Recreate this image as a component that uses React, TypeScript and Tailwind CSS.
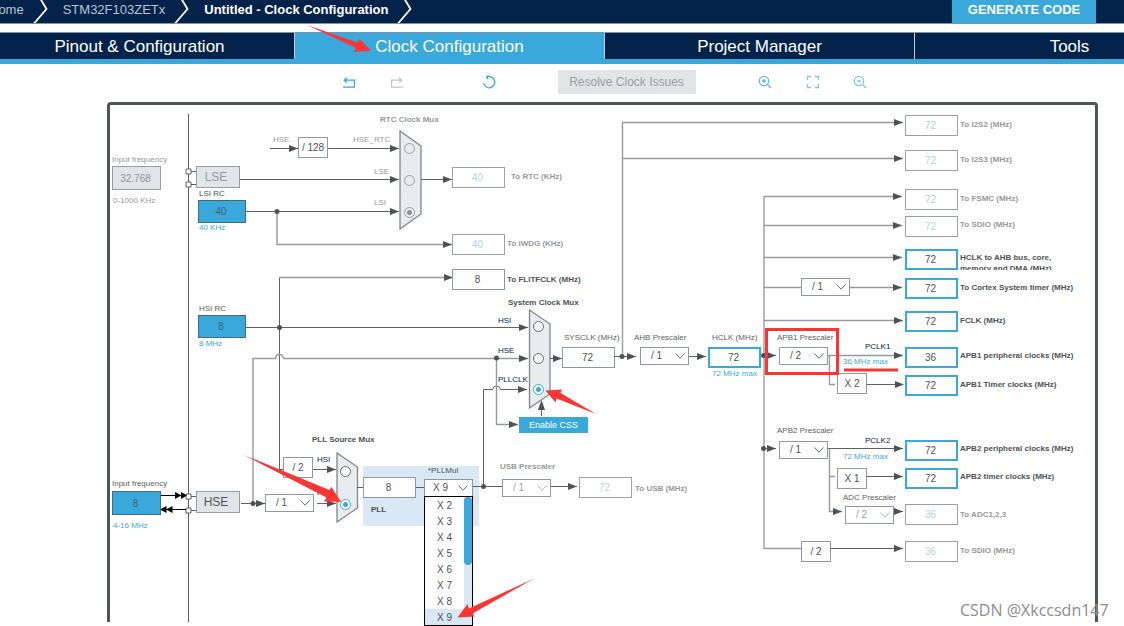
import React, { useState } from "react";

/* Board coordinates count from the top of the window; the board starts below the toolbar. */
const BOARD_TOP = 100;

type Tone = "dark" | "mid" | "gray" | "blue" | "navy";

const toneClass: Record<Tone, string> = {
  dark: "text-[#4d5256]",
  mid: "text-[#5d6164]",
  gray: "text-[#96999b]",
  blue: "text-[#39a9dc]",
  navy: "text-[#03234b]",
};

const place = (x: number, y: number, w?: number, h?: number): React.CSSProperties => ({
  left: x,
  top: y - BOARD_TOP,
  width: w,
  height: h,
});

/* y is the vertical middle of the text line */
function Caption({ x, y, text, tone = "mid", bold = false, htmlFor }: {
  x: number; y: number; text: string; tone?: Tone; bold?: boolean; htmlFor?: string;
}) {
  const cls = `absolute whitespace-nowrap text-[8px] leading-[10px] ${toneClass[tone]} ${bold ? "font-bold" : ""}`;
  return htmlFor ? (
    <label htmlFor={htmlFor} className={cls} style={place(x, y - 5)}>{text}</label>
  ) : (
    <span className={cls} style={place(x, y - 5)}>{text}</span>
  );
}

type Look = "off" | "plain" | "active" | "source" | "sourceOff";

const lookClass: Record<Look, string> = {
  off: "border border-[#9aa2a8] bg-white text-[#b9d0e6]",
  plain: "border border-[#8f989e] bg-white text-[#4d5256]",
  active: "border-2 border-[#39a9dc] bg-white text-[#4d5256]",
  source: "border border-[#47697c] bg-[#39a9dc] text-[#44606f]",
  sourceOff: "border border-[#959ea5] bg-[#e1e5e8] text-[#8c969c]",
};

function ValueBox({ id, x, y, w = 53, h = 21, value, look = "plain", label }: {
  id: string; x: number; y: number; w?: number; h?: number; value: string; look?: Look; label?: string;
}) {
  return (
    <input
      id={id}
      aria-label={label}
      defaultValue={value}
      disabled={look === "off" || look === "sourceOff"}
      className={`absolute p-0 pr-0.5 text-center text-[10px] leading-4 outline-none ${lookClass[look]}`}
      style={place(x, y, w, h)}
    />
  );
}

function Fixed({ x, y, text }: { x: number; y: number; text: string }) {
  return (
    <div
      className="absolute flex items-center justify-center whitespace-nowrap border border-[#8f989e] bg-white text-[10px] text-[#4d5256]"
      style={place(x, y, 30, 21)}
    >
      {text}
    </div>
  );
}

function Chevron({ color }: { color: string }) {
  return (
    <svg viewBox="0 0 10 6" className="pointer-events-none absolute right-1 top-1/2 h-1.5 w-2.5 -translate-y-1/2" aria-hidden="true">
      <path d="M.5 .5 5 5.200 9.500 .5" fill="none" stroke={color} strokeWidth="1" />
    </svg>
  );
}

function Prescaler({ id, x, y, value, label, off = false }: {
  id: string; x: number; y: number; value: string; label?: string; off?: boolean;
}) {
  return (
    <div className="absolute" style={place(x, y, 49, 18)}>
      <select
        id={id}
        aria-label={label}
        defaultValue={value}
        disabled={off}
        className={`block h-full w-full appearance-none border border-[#8f989e] bg-white p-0 pl-2.5 text-[10px] leading-4 opacity-100 outline-none ${off ? "text-[#9c9fa1]" : "text-[#4d5256]"}`}
      >
        {["/ 1", "/ 2", "/ 4", "/ 8", "/ 16"].map((o) => (
          <option key={o}>{o}</option>
        ))}
      </select>
      <Chevron color={off ? "#b3b7ba" : "#666a6d"} />
    </div>
  );
}

function MuxRadio({ group, x, y, label, checked, onChange, off = false }: {
  group: string; x: number; y: number; label: string; checked: boolean; onChange: () => void; off?: boolean;
}) {
  const ring = off
    ? "border-[#9c9fa1] checked:bg-[radial-gradient(circle,#8c9093_0_2px,transparent_3px)]"
    : "border-[#666a6d] checked:border-[#39a9dc] checked:bg-[radial-gradient(circle,#39a9dc_0_2px,#fff_3px)] bg-white";
  return (
    <input
      type="radio"
      name={group}
      aria-label={label}
      checked={checked}
      onChange={onChange}
      disabled={off}
      className={`absolute m-0 appearance-none rounded-full border ${ring}`}
      style={place(x - 5, y - 5, 11, 11)}
    />
  );
}

const outputs: { y: number; cap: number; value: string; text: string; on: boolean }[] = [
  { y: 115, cap: 125, value: "72", text: "To I2S2 (MHz)", on: false },
  { y: 150, cap: 160, value: "72", text: "To I2S3 (MHz)", on: false },
  { y: 189, cap: 199, value: "72", text: "To FSMC (MHz)", on: false },
  { y: 216, cap: 225, value: "72", text: "To SDIO (MHz)", on: false },
  { y: 278, cap: 288, value: "72", text: "To Cortex System timer (MHz)", on: true },
  { y: 311, cap: 321, value: "72", text: "FCLK (MHz)", on: true },
  { y: 347, cap: 356, value: "36", text: "APB1 peripheral clocks (MHz)", on: true },
  { y: 375, cap: 385, value: "72", text: "APB1 Timer clocks (MHz)", on: true },
  { y: 440, cap: 449, value: "72", text: "APB2 peripheral clocks (MHz)", on: true },
  { y: 468, cap: 477, value: "72", text: "APB2 timer clocks (MHz)", on: true },
  { y: 504, cap: 515, value: "36", text: "To ADC1,2,3", on: false },
  { y: 541, cap: 551, value: "36", text: "To SDIO (MHz)", on: false },
];

/* Tips of the arrow heads that point right */
const heads: [number, number][] = [
  [298, 148.5], [399, 148.5], [399, 179.5], [399, 211.5], [452, 179.5], [452, 244.5], [453, 277.5],
  [336, 469.5], [265, 503.5], [336, 503.5], [528, 327.5], [528, 358.5], [527, 389.5], [518, 424.5],
  [562, 358.5], [636, 356.5], [706, 356.5], [776, 355.5], [776, 448.5], [842, 511.5], [577, 486.5],
  [903, 122.5], [903, 158.5], [902, 196.5], [902, 225.5], [902, 257.5], [902, 287.5], [903, 320.5],
  [903, 355.5], [904, 384.5], [903, 448.5], [903, 476.5], [903, 511.5], [903, 548.5],
];

const dots: [number, number][] = [
  [277, 211.5], [279.5, 327.5], [253, 503.5], [496.5, 358], [622, 356.5], [763.5, 355.5], [763.5, 448.5], [483.5, 486.5],
];

function Wires() {
  return (
    <svg viewBox="0 100 1124 526" className="pointer-events-none absolute left-0 top-0 h-[526px] w-[1124px]" aria-hidden="true">
      <g fill="#e8ecef" stroke="#7f878c" strokeWidth="1.3">
        <path d="M400 131 421 146V214L400 229Z" />
        <path d="M529.5 310 550 324V394L529.5 408Z" />
        <path d="M337 453 357.500 467V508L337 522Z" />
      </g>
      <g fill="none" stroke="#5d6164" strokeWidth="1">
        <path d="M188.500 114V622" />
        <path d="M270 148.500H298M328 148.500H399M240 179.500H399M246 211.500H399M421 179.500H452" />
        <path d="M246 327.500H528M279.500 277.500V469.500H283M313 469.500H336" />
        <path d="M191 171.500H196M191 184.500H196M191 496.500H196M191 510.500H196" />
        <path d="M241 503.500H265M317 503.500H336M357 487.500H363M416 487.500H425M472 486.500H502M550 486.500H577" />
        <path d="M483.500 486.500V389.500H492.500Q493 386 496.500 386T500.500 389.500H527" />
        <path d="M550 358.500H562M615 356.500H636M688 356.500H706M541.500 416V403" />
        <path d="M760 355.500H776M764 448.500H776M828 448.500H903M866 476.500H903M866 384.500H903M893 511.500H903M831 548.500H903" />
      </g>
      <g fill="none" stroke="#979b9e" strokeWidth="1.4">
        <path d="M277 211.500V244.500H452M279.500 277.500H452" />
        <path d="M253 503V358.500H275.500Q276 354.500 279.500 354.500T283.500 358.500H528" />
        <path d="M496.500 358V424.500H518" />
        <path d="M622.500 356V122.500H903M622.500 158.500H903" />
        <path d="M764 196.500H902M764 225.500H902M764 257.500H902M764 287.500H902M764 320.500H903M764 196.500V548.500H801" />
        <path d="M828 355.500H903M829.500 355.500V384.500H835M829.500 448.500V511.500H842M829.500 476.500H835" />
      </g>
      <g fill="#4d5256">
        {heads.map(([x, y]) => (
          <path key={`${x}-${y}`} d={`M${x} ${y}L${x - 9} ${y - 3.5}V${y + 3.5}Z`} />
        ))}
        <path d="M541.500 400 538 410H545Z" />
        {dots.map(([x, y]) => (
          <circle key={`${x}-${y}`} cx={x} cy={y} r="2.5" />
        ))}
      </g>
      <g fill="#fff" stroke="#5d6164" strokeWidth="1">
        <path d="M186 169h5v5h-5ZM186 182h5v5h-5ZM186 494h5v5h-5ZM186 508h5v5h-5Z" />
      </g>
      <path d="M161 495.500H176M172 509.500H186" stroke="#000" fill="none" />
      <path d="M175 492 181.500 495.500 175 499ZM181 492 187 495.500 181 499ZM166.500 506 160 509.500 166.500 513ZM172.500 506 166 509.500 172.500 513Z" fill="#000" />
    </svg>
  );
}

function Marks() {
  return (
    <svg viewBox="0 0 1124 626" className="pointer-events-none absolute left-0 top-0 z-20 h-[626px] w-[1124px]" aria-hidden="true">
      <g fill="#fb3533">
        <path d="M307 25 357 42.500 359.500 39 371 50.500 354 52 356 48Z" />
        <path d="M244 455 329.500 490 331.500 487 341 502 324 501.500 326.500 497.500Z" />
        <path d="M545.500 390.500 562 389.500 560.500 393 596 414 556.500 398.500 555.500 402.500Z" />
        <path d="M457.500 617.500 467.500 604 469 608.500 534 578.500 472.500 613.500 474.500 616.500Z" />
        <path d="M844 368.500H898V371.500H844Z" />
      </g>
      <path d="M766.500 329.500H837.500V373.500H766.500Z" fill="none" stroke="#fb3533" strokeWidth="3" />
    </svg>
  );
}

function Crumb({ text, current = false }: { text: string; current?: boolean }) {
  return (
    <li className="flex shrink-0 items-start">
      <a href="#" className={`whitespace-nowrap pr-[9px] text-[13px] leading-5 ${current ? "font-bold text-white" : "text-[#b9c4d2]"}`}>{text}</a>
      <svg viewBox="0 0 15 23" className="mr-[15px] h-[23px] w-[15px]" aria-hidden="true">
        <path d="M7.500 -1 13.500 9 1 23.500" fill="none" stroke="#fff" strokeWidth="1.800" />
      </svg>
    </li>
  );
}

function Tool({ label, tone, className = "", children }: { label: string; tone: string; className?: string; children: React.ReactNode }) {
  return (
    <button type="button" aria-label={label} className={`h-3.5 w-3.5 shrink-0 ${className}`}>
      <svg viewBox="0 0 14 14" className="h-full w-full" fill="none" stroke={tone} strokeWidth="1.300">
        {children}
      </svg>
    </button>
  );
}

const tabs = ["Pinout & Configuration", "Clock Configuration", "Project Manager", "Tools"];
const factors = ["X 2", "X 3", "X 4", "X 5", "X 6", "X 7", "X 8", "X 9"];

export default function App() {
  const [tab, setTab] = useState("Clock Configuration");
  const [sys, setSys] = useState("PLLCLK");
  const [pll, setPll] = useState("HSE");
  const [factor, setFactor] = useState("X 9");

  return (
    <div className="relative min-h-screen overflow-hidden bg-white font-['Liberation_Sans',Arial,sans-serif]">
      <header className="flex h-6 items-start justify-between border-b border-[#8391a5] bg-[#03234b]">
        <nav aria-label="Breadcrumb">
          <ol className="-ml-[11px] flex">
            <Crumb text="Home" />
            <Crumb text="STM32F103ZETx" />
            <Crumb text="Untitled - Clock Configuration" current />
          </ol>
        </nav>
        <button type="button" className="mr-7 h-[23px] w-36 shrink-0 bg-[#39a9dc] pb-[3px] text-[13px] font-bold leading-5 text-white">
          GENERATE CODE
        </button>
      </header>

      <div role="tablist" className="-ml-[15px] -mr-[101px] mt-2 grid grid-cols-4 border-b-[5px] border-[#39a9dc]">
        {tabs.map((t) => (
          <button
            key={t}
            type="button"
            role="tab"
            aria-selected={tab === t}
            onClick={() => setTab(t)}
            className={`h-[27px] border-r border-t border-r-[#c5cdd6] border-t-[#8391a5] pt-0.5 text-[17px] leading-6 text-white ${tab === t ? "bg-[#39a9dc]" : "bg-[#03234b]"}`}
          >
            {t}
          </button>
        ))}
      </div>

      <div role="toolbar" className="flex h-9 items-center justify-center pl-[84px]">
        <Tool label="Undo" tone="#39a9dc">
          <path d="M1 12.200H12.500V5.200H2.500M5 2.700 2.200 5.200 5 7.700" />
        </Tool>
        <Tool label="Redo" tone="#c4c7c9" className="ml-[34px]">
          <path d="M13 12.200H1.500V5.200H11.500M9 2.700 11.800 5.200 9 7.700" />
        </Tool>
        <Tool label="Reset" tone="#39a9dc" className="ml-[78px]">
          <path d="M5 2A5.600 5.600 0 1 1 1.600 8M6.500 .5 4.500 2 6 4" />
        </Tool>
        <button type="button" disabled className="ml-[62px] h-6 w-[138px] shrink-0 whitespace-nowrap bg-[#e1e5e8] text-xs text-[#9a9fa3]">
          Resolve Clock Issues
        </button>
        <Tool label="Zoom in" tone="#62bce5" className="ml-[62px]">
          <circle cx="6" cy="6" r="4.700" />
          <path d="M9.500 9.500 13 13M6 4V8M4 6H8" />
        </Tool>
        <Tool label="Fit" tone="#7fc8ea" className="ml-[34px]">
          <path d="M1.500 5V1.500H5M9 1.500H12.500V5M12.500 9V12.500H9M5 12.500H1.500V9" />
        </Tool>
        <Tool label="Zoom out" tone="#7fc8ea" className="ml-[33px]">
          <circle cx="6" cy="6" r="4.700" />
          <path d="M9.500 9.500 13 13M4 6H8" />
        </Tool>
      </div>

      <main className="relative h-[526px]">
        <div className="absolute rounded-t-sm border-x-[3px] border-t-[3px] border-[#4f5457]" style={place(107, 102, 991, 520)} />
        <div className="absolute bg-[#d9e8f5]" style={place(363, 466, 116, 60)} />
        <Wires />

        {/* Sources */}
        <Caption x={112} y={160} text="Input frequency" tone="gray" htmlFor="lse-in" />
        <ValueBox id="lse-in" x={112} y={166} w={49} h={24} value="32.768" look="sourceOff" />
        <Caption x={113} y={201} text="0-1000 KHz" tone="gray" />
        <div className="absolute flex items-center justify-center border border-[#959ea5] bg-[#e1e5e8] pr-1 text-xs text-[#949ea5]" style={place(196, 166, 44, 22)}>LSE</div>
        <Caption x={199} y={194} text="LSI RC" tone="dark" htmlFor="lsi" />
        <ValueBox id="lsi" x={198} y={200} w={48} h={23} value="40" look="source" />
        <Caption x={199} y={228} text="40 KHz" tone="blue" />
        <Caption x={199} y={309} text="HSI RC" htmlFor="hsi" />
        <ValueBox id="hsi" x={198} y={315} w={48} h={23} value="8" look="source" />
        <Caption x={199} y={344} text="8 MHz" tone="blue" />
        <Caption x={112} y={484} text="Input frequency" htmlFor="hse-in" />
        <ValueBox id="hse-in" x={112} y={491} w={49} h={24} value="8" look="source" />
        <Caption x={113} y={526} text="4-16 MHz" tone="blue" />
        <div className="absolute flex items-center justify-center border border-[#959ea5] bg-[#e1e5e8] pr-1 text-xs text-[#4d5256]" style={place(196, 491, 44, 22)}>HSE</div>

        {/* RTC mux */}
        <Caption x={380} y={120} text="RTC Clock Mux" tone="gray" bold />
        <Caption x={273} y={140} text="HSE" tone="gray" />
        <Fixed x={298} y={137} text="/ 128" />
        <Caption x={353} y={140} text="HSE_RTC" tone="gray" />
        <Caption x={374} y={172} text="LSE" tone="gray" />
        <Caption x={374} y={203} text="LSI" tone="gray" />
        <MuxRadio group="rtc" label="HSE_RTC" x={409} y={148} checked={false} onChange={() => {}} off />
        <MuxRadio group="rtc" label="LSE" x={409} y={180} checked={false} onChange={() => {}} off />
        <MuxRadio group="rtc" label="LSI" x={409} y={212} checked onChange={() => {}} off />
        <ValueBox id="rtc-out" x={452} y={167} value="40" look="off" />
        <Caption x={511} y={177} text="To RTC (KHz)" tone="gray" bold htmlFor="rtc-out" />
        <ValueBox id="iwdg-out" x={452} y={234} value="40" look="off" />
        <Caption x={507} y={244} text="To IWDG (KHz)" tone="gray" bold htmlFor="iwdg-out" />
        <ValueBox id="flitf-out" x={452} y={269} value="8" />
        <Caption x={507} y={280} text="To FLITFCLK (MHz)" tone="dark" bold htmlFor="flitf-out" />

        {/* System clock mux */}
        <Caption x={508} y={303} text="System Clock Mux" tone="dark" bold />
        <Caption x={498} y={321} text="HSI" tone="navy" />
        <Caption x={498} y={351} text="HSE" tone="navy" />
        <Caption x={498} y={380} text="PLLCLK" tone="navy" />
        <MuxRadio group="sys" label="HSI" x={538} y={326} checked={sys === "HSI"} onChange={() => setSys("HSI")} />
        <MuxRadio group="sys" label="HSE" x={538} y={358} checked={sys === "HSE"} onChange={() => setSys("HSE")} />
        <MuxRadio group="sys" label="PLLCLK" x={538} y={389} checked={sys === "PLLCLK"} onChange={() => setSys("PLLCLK")} />
        <button type="button" className="absolute whitespace-nowrap bg-[#39a9dc] text-[9px] leading-4 text-white" style={place(519, 417, 69, 16)}>Enable CSS</button>
        <Caption x={564} y={338} text="SYSCLK (MHz)" htmlFor="sysclk" />
        <ValueBox id="sysclk" x={562} y={347} value="72" />
        <Caption x={634} y={338} text="AHB Prescaler" htmlFor="ahb" />
        <Prescaler id="ahb" x={640} y={347} value="/ 1" />
        <Caption x={712} y={338} text="HCLK (MHz)" htmlFor="hclk" />
        <ValueBox id="hclk" x={708} y={347} value="72" look="active" />
        <Caption x={712} y={374} text="72 MHz max" tone="blue" />

        {/* PLL */}
        <Caption x={312} y={440} text="PLL Source Mux" tone="dark" bold />
        <Fixed x={283} y={457} text="/ 2" />
        <Caption x={317} y={460} text="HSI" tone="navy" />
        <Caption x={317} y={493} text="HSE" tone="navy" />
        <Prescaler id="hse-div" x={265} y={494} value="/ 1" label="HSE divider" />
        <MuxRadio group="pll" label="HSI" x={345} y={471} checked={pll === "HSI"} onChange={() => setPll("HSI")} />
        <MuxRadio group="pll" label="HSE" x={345} y={504} checked={pll === "HSE"} onChange={() => setPll("HSE")} />
        <ValueBox id="pll-in" x={363} y={477} value="8" label="PLL" />
        <Caption x={371} y={510} text="PLL" tone="dark" bold />
        <Caption x={428} y={471} text="*PLLMul" tone="dark" htmlFor="pll-mul" />
        <button
          id="pll-mul"
          type="button"
          aria-haspopup="listbox"
          aria-expanded="true"
          className="absolute whitespace-nowrap border border-[#8f989e] bg-white pl-2 text-left text-[10px] leading-4 text-[#4d5256]"
          style={place(424, 479, 49, 18)}
        >
          {factor}
          <Chevron color="#666a6d" />
        </button>
        <div className="absolute z-10 flex border border-black bg-white" style={place(424, 496, 49, 130)}>
          <ul role="listbox" aria-labelledby="pll-mul" className="w-[39px]">
            {factors.map((f) => (
              <li
                key={f}
                role="option"
                aria-selected={f === factor}
                onClick={() => setFactor(f)}
                className={`h-4 cursor-default pl-3 text-[10px] leading-[18px] text-[#4d5256] ${f === factor ? "bg-[#d9e8f5]" : ""}`}
              >
                {f}
              </li>
            ))}
          </ul>
          <div className="flex-1 bg-[#d9e8f5]">
            <div className="h-[68px] rounded-full bg-[#39a9dc]" />
          </div>
        </div>
        <Caption x={500} y={467} text="USB Prescaler" tone="gray" bold htmlFor="usb-div" />
        <Prescaler id="usb-div" x={502} y={479} value="/ 1" off />
        <ValueBox id="usb-out" x={579} y={477} value="72" look="off" />
        <Caption x={635} y={489} text="To USB (MHz)" tone="gray" bold htmlFor="usb-out" />

        {/* Bus prescalers */}
        <Prescaler id="cortex" x={801} y={278} value="/ 1" label="Cortex prescaler" />
        <Caption x={777} y={338} text="APB1 Prescaler" htmlFor="apb1" />
        <Prescaler id="apb1" x={779} y={347} value="/ 2" />
        <Fixed x={837} y={373} text="X 2" />
        <Caption x={865} y={347} text="PCLK1" tone="navy" />
        <Caption x={843} y={362} text="36 MHz max" tone="blue" />
        <Caption x={777} y={431} text="APB2 Prescaler" htmlFor="apb2" />
        <Prescaler id="apb2" x={779} y={441} value="/ 1" />
        <Caption x={865} y={441} text="PCLK2" tone="navy" />
        <Caption x={843} y={457} text="72 MHz max" tone="blue" />
        <Fixed x={837} y={468} text="X 1" />
        <Caption x={843} y={498} text="ADC Prescaler" htmlFor="adc" />
        <Prescaler id="adc" x={845} y={506} value="/ 2" off />
        <Fixed x={801} y={541} text="/ 2" />

        {/* Outputs */}
        <ValueBox id="ahb-out" x={905} y={249} value="72" look="active" />
        <label
          htmlFor="ahb-out"
          className="absolute overflow-hidden whitespace-nowrap text-[8px] font-bold leading-[11px] text-[#4d5256]"
          style={place(960, 252, 120, 18)}
        >
          HCLK to AHB bus, core,
          <br />
          memory and DMA (MHz)
        </label>
        {outputs.map((o) => (
          <React.Fragment key={o.y}>
            <ValueBox id={`out-${o.y}`} x={905} y={o.y} value={o.value} look={o.on ? "active" : "off"} />
            <Caption x={960} y={o.cap} text={o.text} tone={o.on ? "dark" : "gray"} bold htmlFor={`out-${o.y}`} />
          </React.Fragment>
        ))}

        <p className="absolute whitespace-nowrap font-['Open_Sans','Noto_Sans',sans-serif] text-[16px] leading-5 text-[#8d8d8d]" style={place(960, 600)}>
          CSDN @Xkccsdn147
        </p>
      </main>

      <Marks />
    </div>
  );
}
